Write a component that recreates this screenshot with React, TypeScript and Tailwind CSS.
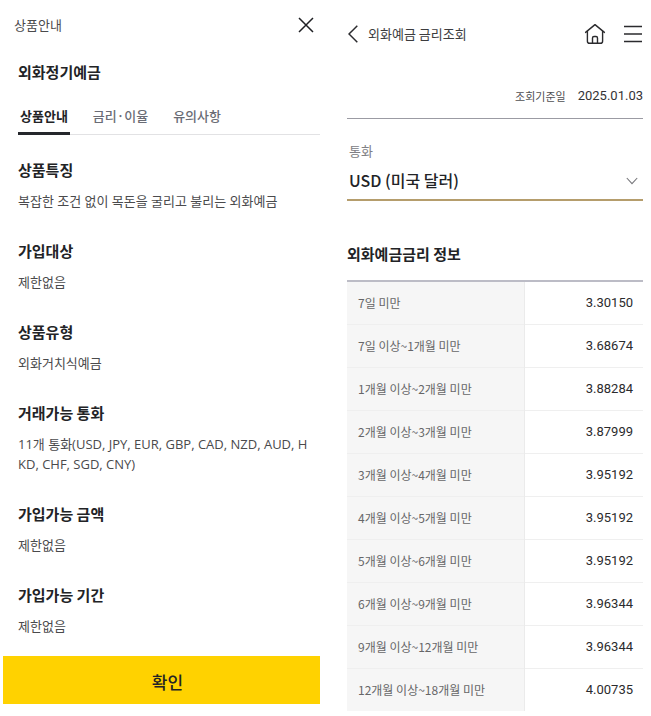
import { useState } from "react";
import clsx from "clsx";

const TABS = ["상품안내", "금리·이율", "유의사항"];

const DETAILS = [
  { title: "상품특징", body: "복잡한 조건 없이 목돈을 굴리고 불리는 외화예금" },
  { title: "가입대상", body: "제한없음" },
  { title: "상품유형", body: "외화거치식예금" },
  {
    title: "거래가능 통화",
    body: "11개 통화(USD, JPY, EUR, GBP, CAD, NZD, AUD, HKD, CHF, SGD, CNY)",
  },
  { title: "가입가능 금액", body: "제한없음" },
  { title: "가입가능 기간", body: "제한없음" },
];

const RATES = [
  { term: "7일 미만", rate: "3.30150" },
  { term: "7일 이상~1개월 미만", rate: "3.68674" },
  { term: "1개월 이상~2개월 미만", rate: "3.88284" },
  { term: "2개월 이상~3개월 미만", rate: "3.87999" },
  { term: "3개월 이상~4개월 미만", rate: "3.95192" },
  { term: "4개월 이상~5개월 미만", rate: "3.95192" },
  { term: "5개월 이상~6개월 미만", rate: "3.95192" },
  { term: "6개월 이상~9개월 미만", rate: "3.96344" },
  { term: "9개월 이상~12개월 미만", rate: "3.96344" },
  { term: "12개월 이상~18개월 미만", rate: "4.00735" },
];

function CloseIcon() {
  return (
    <svg viewBox="0 0 16 16" className="size-4" fill="none" stroke="currentColor" strokeWidth="1.5">
      <path d="M1 1l14 14M15 1L1 15" />
    </svg>
  );
}

function BackIcon() {
  return (
    <svg viewBox="0 0 10 18" className="h-[18px] w-[10px]" fill="none" stroke="currentColor" strokeWidth="1.5">
      <path d="M9.3 0.7L1 9l8.3 8.3" />
    </svg>
  );
}

function HomeIcon() {
  return (
    <svg
      viewBox="0 0 22 22"
      className="size-[22px]"
      fill="none"
      stroke="currentColor"
      strokeWidth="1.4"
      strokeLinecap="round"
      strokeLinejoin="round"
    >
      <path d="M1.6 9.4L11 1.6l9.4 7.8" />
      <path d="M3.4 8.2v10q0 2.1 2.1 2.1h11q2.1 0 2.1-2.1v-10" />
      <path d="M8.5 20.2v-5.2q0-1.5 1.5-1.5h2q1.5 0 1.5 1.5v5.2" />
    </svg>
  );
}

function MenuIcon() {
  return (
    <svg viewBox="0 0 20 18" className="h-[18px] w-5" fill="none" stroke="currentColor" strokeWidth="1.4">
      <path d="M1 1.5h18M1 9h18M1 16.5h18" />
    </svg>
  );
}

function ProductGuide() {
  const [tab, setTab] = useState(TABS[0]);

  return (
    <section className="flex flex-col">
      <header className="flex h-[50px] items-center justify-between pl-[11px] pr-[6px]">
        <h1 className="text-[13px] text-[#4a4a4c]">상품안내</h1>
        <button type="button" aria-label="닫기" className="text-[#1f2024]">
          <CloseIcon />
        </button>
      </header>

      <div className="pl-[15px]">
        <h2 className="mt-[10px] text-[15px] leading-6 font-bold text-[#222326]">외화정기예금</h2>

        <div role="tablist" className="mt-[22px] flex gap-[21px] border-b border-[#e2e2e4]">
          {TABS.map((name) => (
            <button
              key={name}
              type="button"
              role="tab"
              aria-selected={tab === name}
              onClick={() => setTab(name)}
              className={clsx(
                "-mb-px border-b-[3px] px-[2px] pb-[6px] text-[13px] leading-5",
                tab === name
                  ? "border-[#25272c] font-bold text-[#222326]"
                  : "border-transparent font-medium text-[#6a6c75]",
              )}
            >
              {name}
            </button>
          ))}
        </div>

        <div className="mt-[23px] space-y-7">
          {DETAILS.map(({ title, body }) => (
            <div key={title}>
              <h3 className="text-[15px] leading-6 font-bold text-[#222326]">{title}</h3>
              <p className="mt-[9px] pr-2 font-['Open_Sans','Noto_Sans_CJK_KR',sans-serif] text-[13px] leading-5 break-all text-[#4a4a4c]">
                {body}
              </p>
            </div>
          ))}
        </div>
      </div>

      <button
        type="button"
        className="mt-5 h-12 bg-[#ffd200] pt-1 pl-3 text-[17px] font-medium text-[#222326]"
      >
        확인
      </button>
    </section>
  );
}

function RateLookup() {
  return (
    <section>
      <header className="flex h-[68px] items-center text-[#2b2b2e]">
        <button type="button" aria-label="뒤로" className="pl-px">
          <BackIcon />
        </button>
        <h1 className="ml-[10px] text-[13px] text-[#3c3c3e]">외화예금 금리조회</h1>
        <button type="button" aria-label="홈" className="ml-auto">
          <HomeIcon />
        </button>
        <button type="button" aria-label="메뉴" className="ml-[17px]">
          <MenuIcon />
        </button>
      </header>

      <dl className="flex items-center justify-end gap-3 border-b border-[#9b9ba3] pt-[18px] pb-3 leading-5">
        <dt className="text-[11px] text-[#4f4f52]">조회기준일</dt>
        <dd className="font-[Roboto] text-[13px] text-[#333335]">2025.01.03</dd>
      </dl>

      <div className="mt-[22px] border-b-2 border-[#b59d6c]">
        <label htmlFor="currency" className="block pl-[2px] text-[13px] leading-5 text-[#808084]">
          통화
        </label>
        <div className="relative">
          <select
            id="currency"
            className="h-[38px] w-full appearance-none bg-transparent pl-[2px] text-[16px] font-medium text-[#222326]"
          >
            <option>USD (미국 달러)</option>
          </select>
          <svg
            viewBox="0 0 12 8"
            className="pointer-events-none absolute top-4 right-[5px] h-2 w-3"
            fill="none"
            stroke="#77777b"
            strokeWidth="1.1"
          >
            <path d="M0.8 1L6 6.6 11.2 1" />
          </svg>
        </div>
      </div>

      <h2 className="mt-[41px] text-[15px] leading-6 font-bold text-[#222326]">외화예금금리 정보</h2>

      <table className="mt-[14px] w-full table-fixed border-t-2 border-[#bcbcc6]">
        <tbody>
          {RATES.map(({ term, rate }) => (
            <tr key={term} className="h-[43px] border-b border-[#efefef] last:border-b-0">
              <th
                scope="row"
                className="w-3/5 border-r border-[#ebebeb] bg-[#f6f6f6] pl-[11px] text-left text-[12px] font-normal text-[#666668]"
              >
                {term}
              </th>
              <td className="pr-[10px] text-right font-[Roboto] text-[13px] text-[#2b2b2d]">{rate}</td>
            </tr>
          ))}
        </tbody>
      </table>
    </section>
  );
}

export default function App() {
  return (
    <main className="grid min-h-screen grid-cols-[317fr_296fr] items-start gap-[27px] bg-white pr-2 pl-[3px] font-['Noto_Sans_CJK_KR',sans-serif]">
      <ProductGuide />
      <RateLookup />
    </main>
  );
}
